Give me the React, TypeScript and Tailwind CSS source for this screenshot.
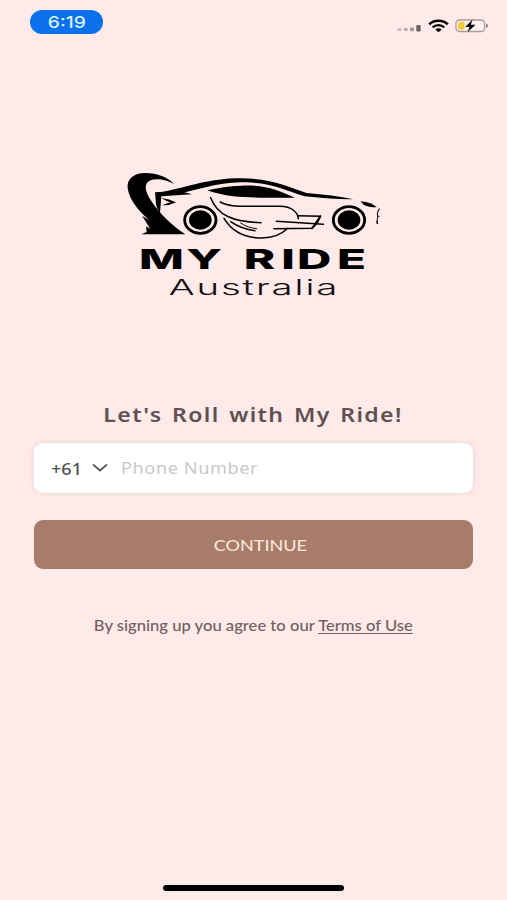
import { useState } from "react";

function StatusBar() {
  return (
    <div className="flex h-[50px] items-start justify-between pl-[30px] pr-[18px] pt-[10px]">
      <div className="flex h-[24px] w-[73px] items-center justify-center rounded-full bg-[#0a70ec]">
        <span className="inline-block scale-x-[1.2] font-['Inter',sans-serif] text-[16px] font-medium leading-none text-[#d8f3ff]">
          6:19
        </span>
      </div>
      <div className="flex h-[32px] items-center gap-[6px]">
        {/* Signal */}
        <svg width="25" height="12" viewBox="0 0 25 12">
          <rect x="0.5" y="8" width="4" height="3" rx="1" fill="#c9b9bb" />
          <rect x="6.8" y="8" width="4" height="3" rx="1" fill="#bcaeb0" />
          <rect x="13" y="7.5" width="4" height="3.7" rx="1" fill="#a3989a" />
          <rect x="19.3" y="5" width="4.4" height="6.5" rx="1" fill="#6b6264" />
        </svg>
        {/* Wifi */}
        <svg width="21" height="14" viewBox="0 0 21 14" fill="none" stroke="#080506">
          <path d="M1.2 5.4C6.2.5 14.8.5 19.8 5.4" strokeWidth="2.7" />
          <path d="M4.7 8.4c3.2-3 8.4-3 11.6 0" strokeWidth="2.3" />
          <path d="M7.3 10.6c1.9-1.7 4.5-1.7 6.4 0l-3.2 2.6z" fill="#080506" stroke="none" />
        </svg>
        {/* Battery */}
        <svg width="34" height="14" viewBox="0 0 34 14">
          <rect x="1" y="1" width="28.5" height="11.5" rx="3.2" fill="#fdf3ee" stroke="#a79c9c" strokeWidth="1.3" />
          <rect x="3" y="2.7" width="6.5" height="8" rx="1.5" fill="#efcb3d" />
          <path d="M31 4.5c2.6.5 2.6 4 0 4.5z" fill="#8d8484" />
          <path d="M17.5 0.8L10 8h4.5l-2 5.2L20.5 5.8h-4.6z" fill="#080506" />
        </svg>
      </div>
    </div>
  );
}

function Logo() {
  return (
    <svg className="block h-[140px] w-[270px]" viewBox="0 0 810 420" role="img" aria-label="My Ride Australia">
      {/* Spoiler */}
      <path d="M162 57C144 37 111 24 77 24C40 24 20 42 23 70C28 107 57 137 87 166L66 152L84 181L91 192L78 184L80 201L64 208H196C158 183 119 146 96 111C79 85 70 64 84 50C100 37 137 42 162 57Z" />
      <path d="M105 82L180 78L216 88L124 94L120 144Q109 130 108 118Z" />
      <path d="M124 99Q148 102 168 112Q150 122 127 121Q141 115 151 112Q139 109 124 99Z" />
      {/* Roof line */}
      <path d="M122 82C210 65 267 40 363 40C446 40 496 61 560 84C613 88 659 94 700 103C650 104 599 98 554 94C493 75 454 54 380 52C295 48 228 78 158 89Z" />
      <path d="M262 76Q309 64 364 62C433 58 474 75 525 98C456 99 389 98 340 94Q296 88 262 76Z" />
      {/* Wing and door lines */}
      <g fill="none" stroke="#000" strokeWidth="4.5" strokeLinecap="round">
        <path d="M272 98C292 151 339 171 423 173" />
        <path d="M301 111C326 126 366 123 412 124H480C514 125 533 140 535 161" />
        <path d="M312 160C335 198 372 219 426 219C461 219 488 205 503 190" />
        <path d="M332 170C352 184 372 193 405 197" />
        <path d="M362 174C378 185 391 189 410 191" strokeWidth="3" />
        <path d="M533 152L600 154L576 190L462 191" />
        <path d="M469 169L610 178" />
        <path d="M601 154L591 174L576 190" strokeWidth="6" />
      </g>
      {/* Front */}
      <path d="M721 109Q756 112 770 127Q745 127 732 120Z" />
      <path d="M779 131Q770 141 773 154L771 177" fill="none" stroke="#211718" strokeWidth="3.5" />
      <path d="M771 154h8M769 168l5 9" stroke="#211718" strokeWidth="3" />
      {/* Wheels */}
      <g fill="none" stroke="#000" strokeWidth="8.5">
        <ellipse cx="241" cy="165" rx="47" ry="40" />
        <ellipse cx="687" cy="165" rx="47" ry="40" />
      </g>
      <ellipse cx="241" cy="165" rx="34" ry="29" />
      <ellipse cx="687" cy="165" rx="34" ry="29" />
      <g fontFamily="Inter, sans-serif">
        <text transform="scale(1.72 1)" x="33.1 115.7 170 215.7 281.4 308.7 378.5" y="312" fontSize="83" fontWeight="800">
          MY RIDE
        </text>
        <text transform="scale(1.8 1)" x="81.2" y="391" fontSize="64" fontWeight="300" fill="#150d0e" textLength="281" lengthAdjust="spacing">
          Australia
        </text>
      </g>
    </svg>
  );
}

export default function App() {
  const [phone, setPhone] = useState("");

  return (
    <div className="flex h-[900px] w-[507px] flex-col overflow-hidden bg-[#feeae9] font-['Lato',sans-serif]">
      <StatusBar />

      <div className="mt-[115px] pl-[120px]">
        <Logo />
      </div>

      <main className="mt-[95px] flex flex-col pl-[34px] pr-[34px]">
        <h1 className="flex h-[28px] items-center justify-center whitespace-nowrap text-[#5f5153]">
          <span className="inline-block scale-x-[1.125] font-['Noto_Sans',sans-serif] text-[20.5px] font-semibold tracking-[1.2px] [word-spacing:2px]">
            Let's Roll with My Ride!
          </span>
        </h1>

        <div className="mt-[15px] flex h-[50px] items-center rounded-[9px] bg-white pl-[17px] font-['Noto_Sans',sans-serif] shadow-[0_0_5px_rgba(150,110,130,0.2)]">
          <span className="w-[32px] whitespace-nowrap pt-px text-[16px] font-medium text-[#555052]">
            <span className="inline-block origin-left scale-x-[1.13]">+61</span>
          </span>
          <svg className="ml-[9px]" width="16" height="10" viewBox="0 0 16 10" fill="none" stroke="#555052" strokeWidth="1.7">
            <path d="M1.5 2l6.5 5.5L14.5 2" strokeLinecap="round" strokeLinejoin="round" />
          </svg>
          <input
            type="tel"
            value={phone}
            onChange={(e) => setPhone(e.target.value)}
            placeholder="Phone Number"
            className="ml-[13px] w-[250px] origin-left scale-x-[1.17] bg-transparent pt-[2px] text-[15.5px] tracking-[0.5px] outline-none placeholder:text-[#cbc8c9]"
          />
        </div>

        <button className="mt-[27px] flex h-[49px] items-center justify-center rounded-[9px] bg-[#a87c6b] pl-[14px] text-[#ffeadd]">
          <span className="inline-block scale-x-[1.13] text-[16px]">CONTINUE</span>
        </button>

        <p className="mt-[45px] flex h-[24px] items-center justify-center whitespace-nowrap text-[14.5px] text-[#715f61]">
          <span className="inline-block scale-x-[1.145] font-medium">
            By signing up you agree to our <a className="underline underline-offset-2">Terms of Use</a>
          </span>
        </p>
      </main>

      {/* Home indicator */}
      <div className="mb-[9px] mt-auto h-[6px] w-[181px] self-center rounded-full bg-black" />
    </div>
  );
}
